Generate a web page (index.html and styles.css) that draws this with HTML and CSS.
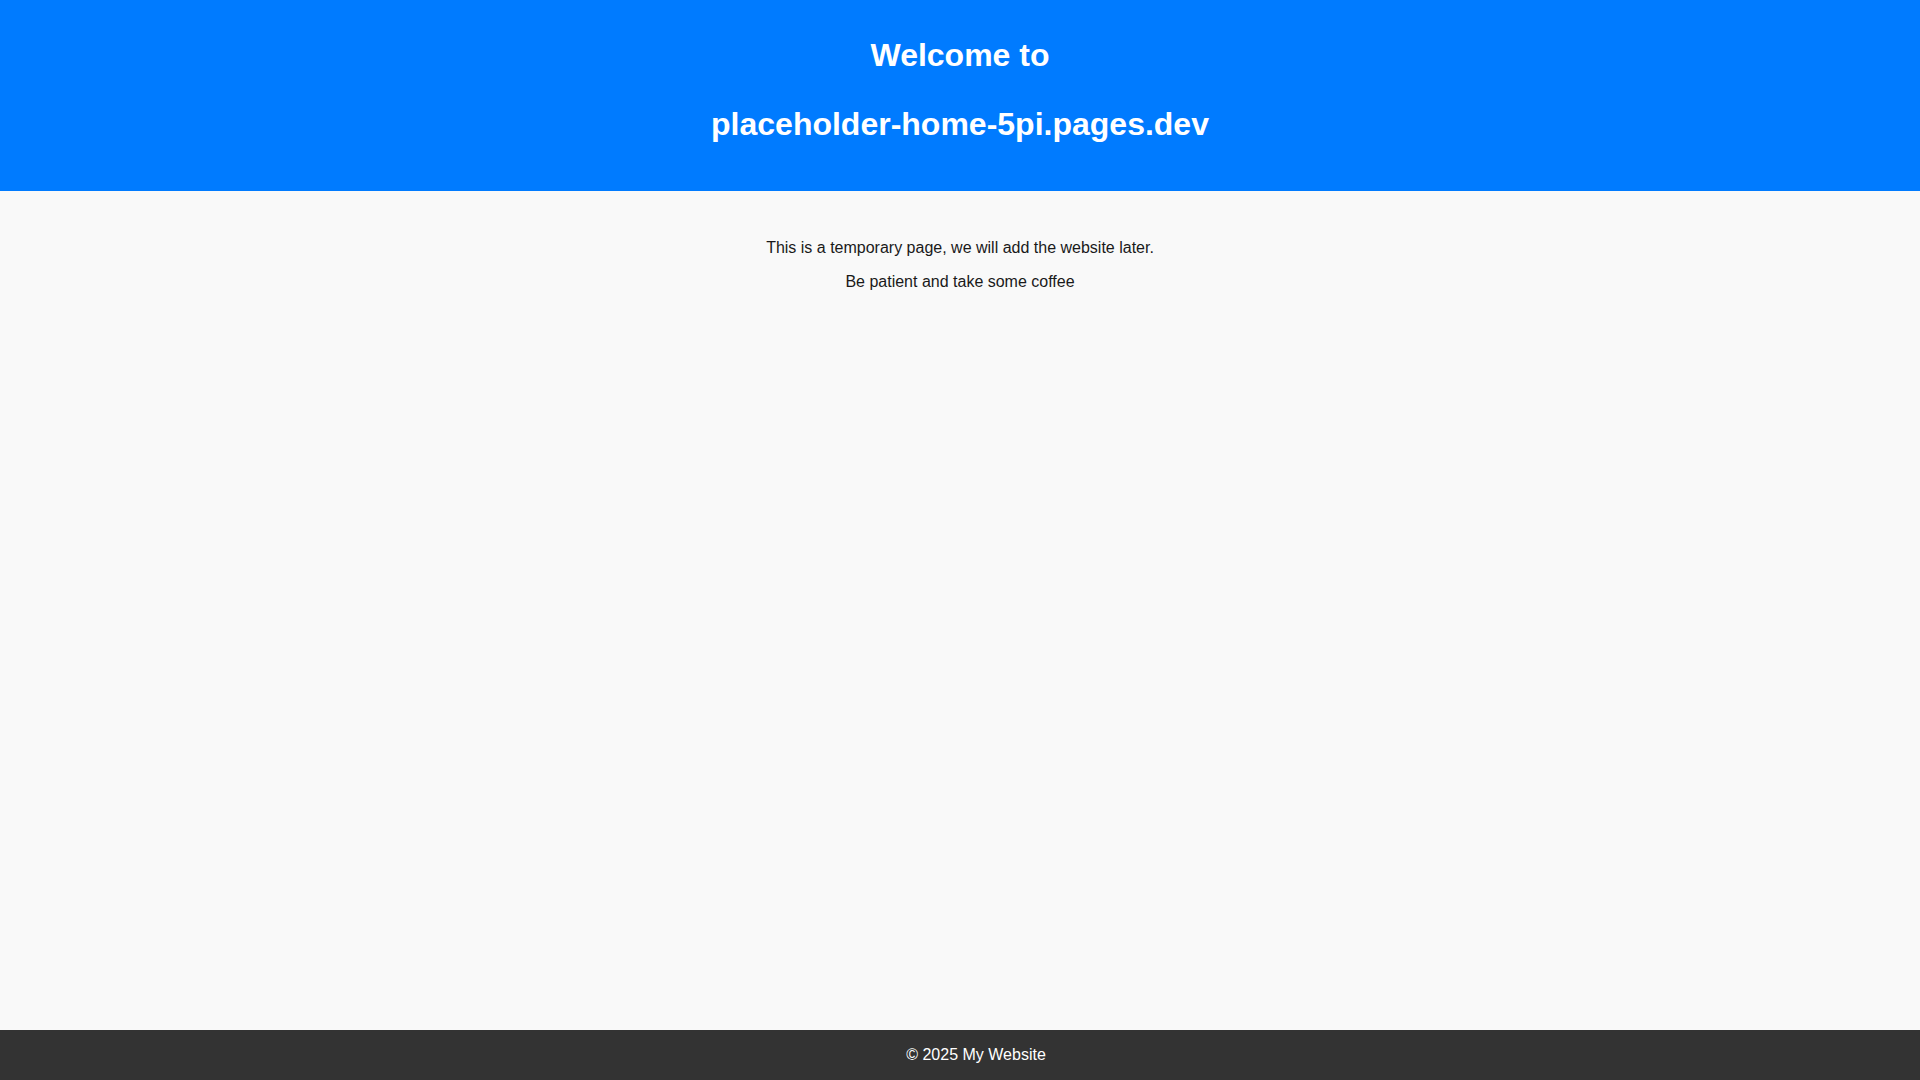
FILE: index.html
```html
<!DOCTYPE html>
<html lang="en">
<head>
<meta charset="utf-8">
<title>placeholder-home-5pi.pages.dev</title>
<link rel="stylesheet" href="styles.css">
</head>
<body>
<div class="page">
  <header class="site-header">
    <h1 class="title">Welcome to</h1>
    <h1 class="title title-domain">placeholder-home-5pi.pages.dev</h1>
  </header>
  <main class="content">
    <p class="line">This is a temporary page, we will add the website later.</p>
    <p class="line">Be patient and take some coffee</p>
  </main>
  <footer class="site-footer">© 2025 My Website</footer>
</div>
</body>
</html>
```

FILE: styles.css
```css
html, body {
  margin: 0;
  padding: 0;
}

body {
  font-family: "Liberation Sans", Arial, sans-serif;
  background: #f9f9f9;
  color: #1a1a1a;
}

.page {
  min-height: 100vh;
  display: flex;
  flex-direction: column;
}

.site-header {
  background: #007bff;
  color: #ffffff;
  text-align: center;
  padding: 30.7px 0 43.3px;
}

.title {
  margin: 0;
  font-size: 32px;
  font-weight: bold;
  line-height: 48px;
}

.title-domain {
  margin-top: 21px;
}

.content {
  flex: 1;
  text-align: center;
  padding-top: 32px;
}

.line {
  margin: 16px 0;
  font-size: 16px;
  line-height: normal;
}

.site-footer {
  background: #333333;
  color: #ffffff;
  text-align: center;
  font-size: 16px;
  line-height: normal;
  padding: 16px 0 16px 32px;
}
```
